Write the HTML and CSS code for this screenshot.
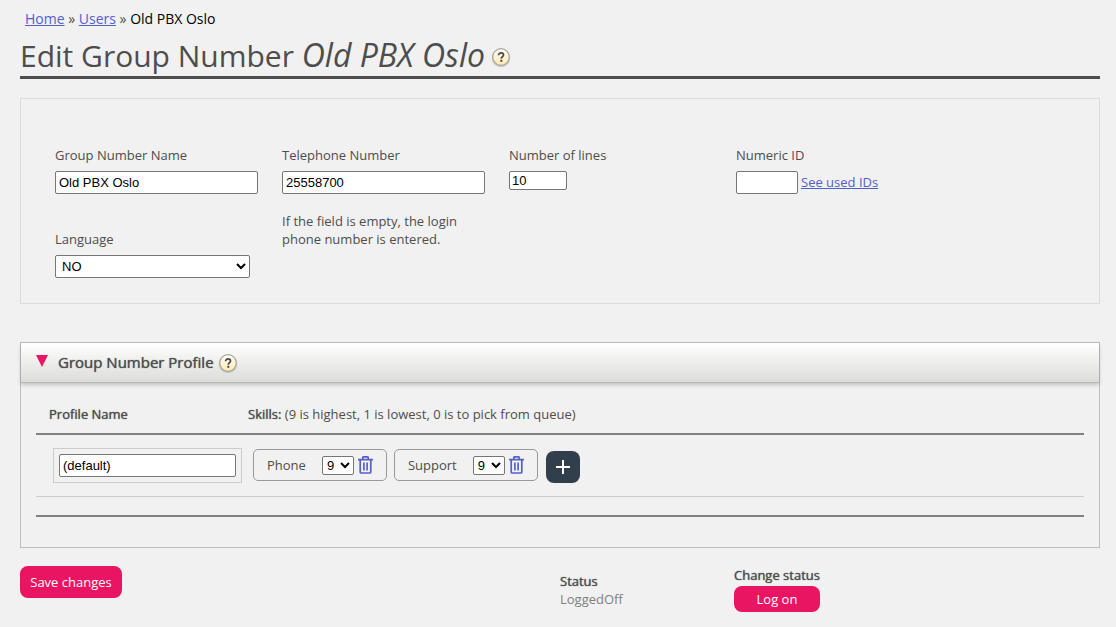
FILE: index.html
```html
<!DOCTYPE html>
<html lang="en">
<head>
<meta charset="utf-8">
<title>Edit Group Number</title>
<link rel="stylesheet" href="styles.css">
</head>
<body>
<svg class="sprite" aria-hidden="true">
  <defs>
    <linearGradient id="help-fill" x1="0" y1="0" x2="0" y2="1">
      <stop offset="0" stop-color="#fffefa"/>
      <stop offset="1" stop-color="#fbe9b0"/>
    </linearGradient>
    <symbol id="help-icon" viewBox="0 0 20 20">
      <circle cx="10" cy="11" r="8.5" fill="none" stroke="#c9c9c9" stroke-width="1.5"/>
      <circle cx="10" cy="10" r="8.3" fill="url(#help-fill)" stroke="#a7a396" stroke-width="1.2"/>
      <path d="M7.6 8.2c0-1.4 1-2.3 2.5-2.3s2.4.8 2.4 2c0 1.7-2.2 1.8-2.2 3.8" fill="none" stroke="#484848" stroke-width="1.7"/>
      <rect x="9.3" y="12.8" width="2" height="2" fill="#484848"/>
    </symbol>
    <symbol id="trash-icon" viewBox="0 0 15 18">
      <path d="M0 3.7h15M4.8 3.5V1.6q0-.8.8-.8h3.8q.8 0 .8.8v1.9M2.2 4v12q0 1 1 1h8.6q1 0 1-1V4M5.9 6.5v8M9.1 6.5v8" fill="none" stroke="#5560cc" stroke-width="1.7"/>
    </symbol>
  </defs>
</svg>
<main class="page">
  <nav class="crumbs"><a href="#">Home</a> » <a href="#">Users</a> » <span class="crumb-current">Old PBX Oslo</span></nav>
  <h1 class="title"><span>Edit Group Number <em>Old PBX Oslo</em></span><svg class="help" role="img" aria-label="Help"><use href="#help-icon"/></svg></h1>

  <form class="form">
    <section class="details">
      <div class="column">
        <div class="field">
          <label for="name">Group Number Name</label>
          <input class="input" id="name" type="text" value="Old PBX Oslo">
        </div>
        <div class="field">
          <label for="language">Language</label>
          <select class="select" id="language"><option>NO</option></select>
        </div>
      </div>
      <div class="column">
        <div class="field">
          <label for="phone">Telephone Number</label>
          <input class="input" id="phone" type="text" value="25558700">
        </div>
        <p class="hint">If the field is empty, the login phone number is entered.</p>
      </div>
      <div class="column">
        <div class="field">
          <label for="lines">Number of lines</label>
          <input class="input input-lines" id="lines" type="text" value="10">
        </div>
      </div>
      <div class="column">
        <div class="field">
          <label for="numeric-id">Numeric ID</label>
          <div class="id-row"><input class="input input-id" id="numeric-id" type="text"><a href="#">See used IDs</a></div>
        </div>
      </div>
    </section>

    <section class="profile">
      <h2 class="profile-head">
        <svg class="arrow" viewBox="0 0 12 12" aria-hidden="true"><path d="M0 0h12L6 12z" fill="#e91562"/></svg>
        <span class="strong">Group Number Profile</span>
        <svg class="help" role="img" aria-label="Help"><use href="#help-icon"/></svg>
      </h2>
      <div class="profile-body">
        <table class="skills">
          <thead>
            <tr>
              <th class="name-col"><span class="strong">Profile Name</span></th>
              <th><span class="strong">Skills:</span> (9 is highest, 1 is lowest, 0 is to pick from queue)</th>
            </tr>
          </thead>
          <tbody>
            <tr>
              <td class="name-cell"><div class="name-box"><input class="input" type="text" aria-label="Profile name" value="(default)"></div></td>
              <td>
                <div class="skill-list">
                  <div class="skill">
                    <label for="skill-phone">Phone</label>
                    <select class="level" id="skill-phone"><option>9</option></select>
                    <button class="trash" type="button" aria-label="Delete Phone"><svg><use href="#trash-icon"/></svg></button>
                  </div>
                  <div class="skill">
                    <label for="skill-support">Support</label>
                    <select class="level" id="skill-support"><option>9</option></select>
                    <button class="trash" type="button" aria-label="Delete Support"><svg><use href="#trash-icon"/></svg></button>
                  </div>
                  <button class="add" type="button" aria-label="Add skill"><svg viewBox="0 0 14 14"><path d="M7 0v14M0 7h14" stroke="#fff" stroke-width="2"/></svg></button>
                </div>
              </td>
            </tr>
          </tbody>
          <tfoot><tr><td colspan="2"></td></tr></tfoot>
        </table>
      </div>
    </section>

    <footer class="actions">
      <button class="button save" type="submit">Save changes</button>
      <div class="status"><span class="strong">Status</span><span class="status-value">LoggedOff</span></div>
      <div class="change"><span class="strong">Change status</span><button class="button log-on" type="button">Log on</button></div>
    </footer>
  </form>
</main>
</body>
</html>
```
FILE: styles.css
```css
* { box-sizing: border-box; }

body {
  margin: 0;
  background: #f1f1f1;
  color: #4d4d4d;
  font: 13px/18px "Open Sans", sans-serif;
}

a { color: #4f62cc; }
p { margin: 0; }

.sprite { position: absolute; width: 0; height: 0; }
.page { padding: 10px 16px 0 20px; }

.crumbs { padding-left: 5px; font-size: 14px; }
.crumb-current { color: #000; }

.title {
  display: flex;
  align-items: center;
  gap: 6px;
  height: 43px;
  margin: 8px 0 0;
  border-bottom: 3px solid #4d4d4d;
  font-size: 30px;
  font-weight: 400;
  line-height: 40px;
}
.title em { font-size: 32px; line-height: 1; }

.help { width: 20px; height: 20px; flex: none; }
.title .help { margin-top: 2px; }

.details {
  display: grid;
  grid-template-columns: repeat(4, 203px);
  gap: 24px;
  margin-top: 19px;
  padding: 47px 34px 25px;
  border: 1px solid #dcdcdc;
}

.column { display: flex; flex-direction: column; gap: 36px; }
.column .hint { margin-top: -18px; }
.field { display: flex; flex-direction: column; align-items: flex-start; gap: 7px; }

.input,
.select,
.level {
  margin: 0;
  border: 1px solid #767676;
  border-radius: 2px;
  background-color: #fff;
  color: #000;
  font: 13px "Liberation Sans", Arial, sans-serif;
}

.input { width: 100%; height: 23px; padding: 0 3px; }
.select { width: 195px; height: 23px; padding: 0 2px; }
.input-lines { width: 58px; height: 19px; padding: 0 2px; }
.input-id { width: 62px; }
.id-row { display: flex; align-items: flex-start; gap: 3px; }
.id-row a { padding-top: 2px; }

.profile { margin-top: 38px; border: 1px solid #bebebe; }

.profile-head {
  display: flex;
  align-items: center;
  height: 40px;
  margin: 0;
  padding: 0 0 1px 15px;
  border-bottom: 1px solid #b8b8b8;
  background: linear-gradient(#fff, #dcdcda);
  box-shadow: 0 2px 4px #00000033;
  font-size: 15px;
  font-weight: 400;
}

.arrow { width: 12px; height: 12px; margin: 0 10px 3px 0; }
.profile-head .help { margin: 2px 0 0 4px; }
.strong { text-shadow: 0 0 1px currentColor; }

.profile-body { padding: 13px 15px 30px; }
.skills { width: 100%; border-collapse: collapse; table-layout: fixed; }
.skills th { height: 38px; padding: 0 0 2px; border-bottom: 2px solid #808080; text-align: left; font-weight: 400; }
.skills .name-col { width: 212px; padding-left: 13px; }
.skills td { padding: 13px 0; border-bottom: 1px solid #ccc; }
.skills .name-cell { padding-left: 17px; }
.skills tfoot td { height: 19px; padding: 0; border-bottom: 2px solid #808080; }

.name-box { width: 189px; padding: 5px; border: 1px solid #ccc; }
.name-box .input { display: block; }

.skill-list { display: flex; align-items: flex-start; gap: 7px; padding-left: 5px; }

.skill {
  display: flex;
  align-items: center;
  height: 32px;
  margin-top: 1px;
  padding: 0 13px;
  border: 1px solid #999;
  border-radius: 5px;
}

.level { width: 32px; height: 19px; margin-left: 16px; padding: 0; }
.trash { margin-left: 4px; padding: 0; border: 0; background: none; }
.trash svg { display: block; width: 15px; height: 18px; }

.add {
  display: grid;
  place-items: center;
  width: 34px;
  height: 32px;
  margin: 3px 0 0 1px;
  padding: 0;
  border: 0;
  border-radius: 8px;
  background: #303f4b;
}
.add svg { width: 14px; height: 14px; }

.actions {
  display: grid;
  grid-template-columns: 540px 174px auto;
  justify-content: start;
  align-items: start;
  padding-top: 18px;
}

.button {
  padding: 0;
  border: 0;
  border-radius: 8px;
  background: #e91562;
  color: #fff;
  font: 13px/18px "Open Sans", sans-serif;
}

.save { width: 102px; height: 32px; }
.status, .change { display: flex; flex-direction: column; }
.status { padding-top: 6px; }
.status-value { color: #808080; }
.change { gap: 2px; }
.log-on { width: 86px; height: 26px; }
```
